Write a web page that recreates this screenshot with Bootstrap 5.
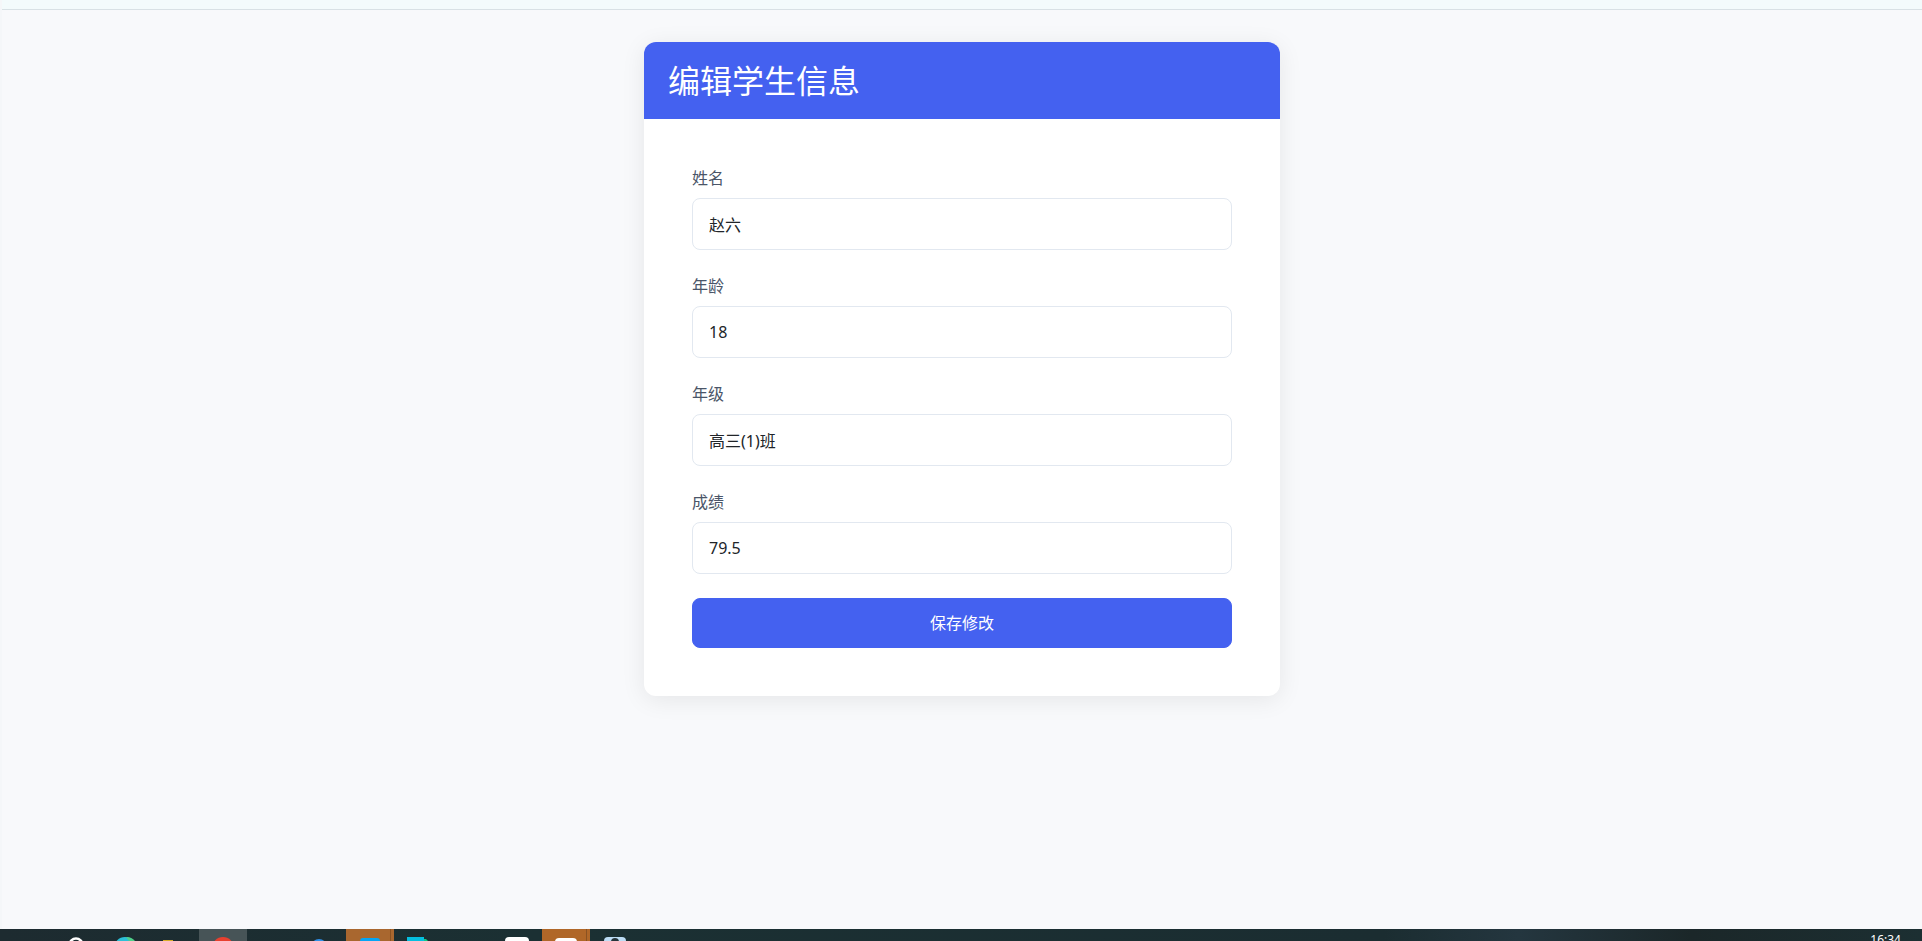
<!DOCTYPE html>
<html lang="zh-CN">
<head>
<meta charset="utf-8">
<meta name="viewport" content="width=device-width, initial-scale=1">
<title>编辑学生信息</title>
<link href="https://cdn.jsdelivr.net/npm/bootstrap@5.3.0/dist/css/bootstrap.min.css" rel="stylesheet">
<style>
:root { --brand: #4461f0; }
body {
  font-family: "Noto Sans", "Noto Sans CJK SC", sans-serif;
  background: #f8f9fb;
  color: #212529;
}
.page-frame { border-left: 2px solid #f5f7f9; }
.top-strip { height: 10px; background: #f3fbfc; border-bottom: 1px solid #d8e1e5; }
.page-main { padding-top: 32px; }
.edit-card { border: 0; border-radius: 12px; box-shadow: 0 4px 24px rgba(0, 0, 0, .08); }
.edit-card .card-header {
  background: var(--brand); color: #fff; border: 0;
  border-radius: 12px 12px 0 0; padding: 19px 24px;
}
.edit-card .card-header h2 { font-size: 32px; line-height: 39px; font-weight: 400; }
.edit-card .card-body { padding: 47px 48px 48px; }
.form-label { color: #4a5568; line-height: 24px; }
.form-control {
  height: 52px; padding: 12px 16px; border: 1px solid #e2e8f0; border-radius: 8px;
  color: #212529; line-height: 24px;
}
.btn-save {
  --bs-btn-color: #fff; --bs-btn-bg: var(--brand); --bs-btn-border-color: var(--brand);
  --bs-btn-hover-color: #fff; --bs-btn-hover-bg: #3651d8; --bs-btn-hover-border-color: #3651d8;
  border-radius: 8px; padding: 12px 24px; line-height: 24px;
}
.taskbar {
  height: 12px; overflow: hidden;
  background: linear-gradient(90deg, #1d2b30, #1b3033 28%, #1b2d31 72%, #24363f 79%, #1b2729 88%, #1c2f32);
}
.taskbar svg { flex: none; }
.task-clock { font-size: 12px; line-height: 16px; color: #fff; margin: 3px 21px 0 0; }
</style>
</head>
<body>
<div class="d-flex flex-column min-vh-100">
  <div class="page-frame flex-grow-1">
    <div class="top-strip"></div>
    <main class="container page-main">
      <div class="row justify-content-center">
        <div class="col-md-6">
          <div class="card edit-card">
            <div class="card-header"><h2 class="mb-0">编辑学生信息</h2></div>
            <div class="card-body">
              <form>
                <div class="mb-4">
                  <label class="form-label d-block" for="name">姓名</label>
                  <input class="form-control" type="text" id="name" value="赵六">
                </div>
                <div class="mb-4">
                  <label class="form-label d-block" for="age">年龄</label>
                  <input class="form-control" type="number" id="age" value="18">
                </div>
                <div class="mb-4">
                  <label class="form-label d-block" for="grade">年级</label>
                  <input class="form-control" type="text" id="grade" value="高三(1)班">
                </div>
                <div class="mb-4">
                  <label class="form-label d-block" for="score">成绩</label>
                  <input class="form-control" type="number" step="0.1" id="score" value="79.5">
                </div>
                <button type="submit" class="btn btn-save w-100">保存修改</button>
              </form>
            </div>
          </div>
        </div>
      </div>
    </main>
  </div>
  <footer class="taskbar d-flex justify-content-between">
    <svg width="640" height="12" viewBox="0 0 640 12" aria-hidden="true">
      <rect x="199" width="48" height="12" fill="#475457"/>
      <rect x="346" width="48" height="12" fill="#a9672f"/>
      <path d="M390.500 0v12" stroke="#8a5222"/>
      <rect x="542" width="48" height="12" fill="#b06728"/>
      <path d="M586.500 0v12" stroke="#8a5222"/>
      <circle cx="76" cy="16" r="6.500" fill="none" stroke="#fff" stroke-width="2.500"/>
      <circle cx="125" cy="19" r="11" fill="#2cc0d8"/>
      <path d="M126 8a11 11 0 0 1 9 4h-6z" fill="#4fd08a"/>
      <rect x="163" y="11" width="10" height="4" fill="#d8ac28"/>
      <circle cx="223" cy="19" r="11" fill="#e8402f"/>
      <circle cx="319" cy="18" r="8" fill="#2f8fe8"/>
      <rect x="360" y="9" width="20" height="12" rx="3" fill="#06a5f5"/>
      <path d="M421 10h5l4 4h-9z" fill="#0ecb85"/>
      <rect x="407" y="8" width="17" height="12" fill="#05bfe0"/>
      <rect x="505" y="8" width="24" height="14" rx="4" fill="#fff"/>
      <rect x="555" y="9" width="22" height="12" rx="4" fill="#fff"/>
      <rect x="604" y="8" width="22" height="14" rx="4" fill="#bcdcf5"/>
      <circle cx="615" cy="13" r="4" fill="#26343a"/>
    </svg>
    <span class="task-clock">16:34</span>
  </footer>
</div>
<script src="https://cdn.jsdelivr.net/npm/bootstrap@5.3.0/dist/js/bootstrap.bundle.min.js"></script>
</body>
</html>
